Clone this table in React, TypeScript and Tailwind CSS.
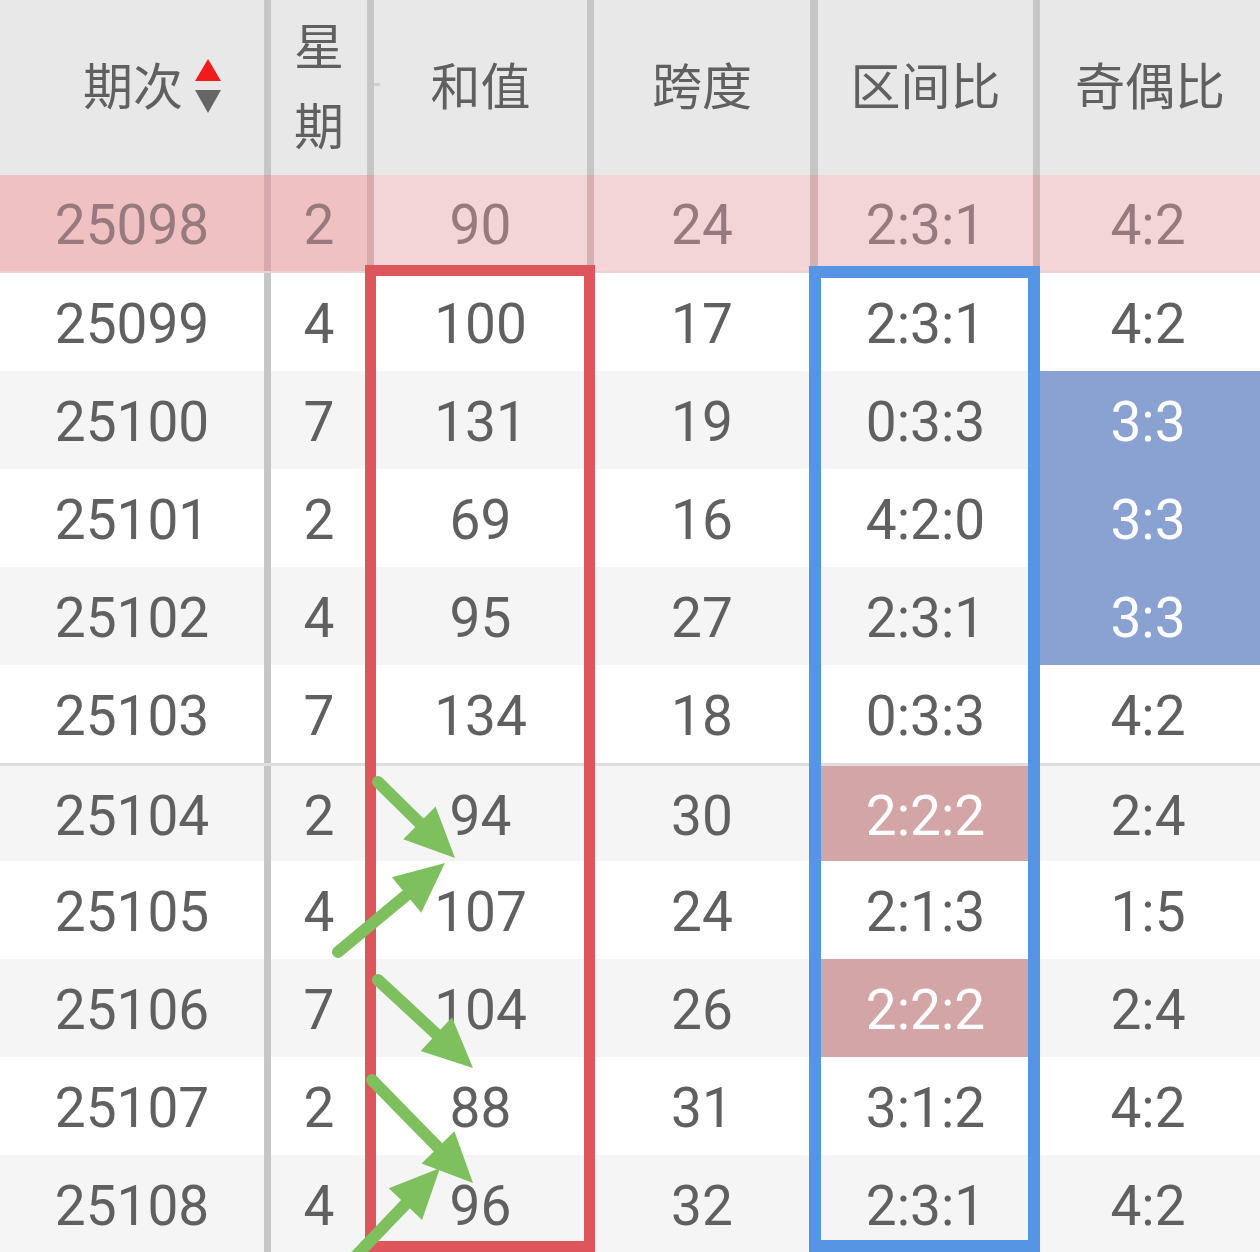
import React from 'react';

type Row = {
  no: string;
  week: string;
  sum: string;
  span: string;
  zone: string;
  oe: string;
  zoneHi?: boolean;
  oeHi?: boolean;
};

const rows: Row[] = [
  { no: '25098', week: '2', sum: '90', span: '24', zone: '2:3:1', oe: '4:2' },
  { no: '25099', week: '4', sum: '100', span: '17', zone: '2:3:1', oe: '4:2' },
  { no: '25100', week: '7', sum: '131', span: '19', zone: '0:3:3', oe: '3:3', oeHi: true },
  { no: '25101', week: '2', sum: '69', span: '16', zone: '4:2:0', oe: '3:3', oeHi: true },
  { no: '25102', week: '4', sum: '95', span: '27', zone: '2:3:1', oe: '3:3', oeHi: true },
  { no: '25103', week: '7', sum: '134', span: '18', zone: '0:3:3', oe: '4:2' },
  { no: '25104', week: '2', sum: '94', span: '30', zone: '2:2:2', oe: '2:4', zoneHi: true },
  { no: '25105', week: '4', sum: '107', span: '24', zone: '2:1:3', oe: '1:5' },
  { no: '25106', week: '7', sum: '104', span: '26', zone: '2:2:2', oe: '2:4', zoneHi: true },
  { no: '25107', week: '2', sum: '88', span: '31', zone: '3:1:2', oe: '4:2' },
  { no: '25108', week: '4', sum: '96', span: '32', zone: '2:3:1', oe: '4:2' },
];

// green hand-drawn arrows: [startX, startY, tipX, tipY]
const arrows: [number, number, number, number][] = [
  [378, 782, 455, 858],
  [338, 952, 445, 863],
  [378, 980, 473, 1068],
  [372, 1080, 473, 1183],
  [352, 1260, 440, 1168],
];

function Arrow({ a }: { a: [number, number, number, number] }) {
  const [x1, y1, x2, y2] = a;
  const dx = x2 - x1;
  const dy = y2 - y1;
  const len = Math.hypot(dx, dy);
  const ux = dx / len;
  const uy = dy / len;
  const head = 50;
  const half = 23;
  const bx = x2 - ux * head;
  const by = y2 - uy * head;
  const p1 = `${bx - uy * half},${by + ux * half}`;
  const p2 = `${bx + uy * half},${by - ux * half}`;
  return (
    <g>
      <line
        x1={x1}
        y1={y1}
        x2={bx + ux * 6}
        y2={by + uy * 6}
        stroke="#7fc05e"
        strokeWidth={12}
        strokeLinecap="round"
      />
      <polygon points={`${x2},${y2} ${p1} ${p2}`} fill="#7fc05e" />
    </g>
  );
}

const cols = 'grid grid-cols-[271px_103px_220px_224px_222px_220px]';
const cell = 'flex items-center justify-center pt-[5px]';

export default function App() {
  return (
    <div
      className="relative w-[1260px] h-[1252px] overflow-hidden bg-white text-[#606060]"
      style={{ fontFamily: 'Roboto, "Noto Sans CJK SC", sans-serif' }}
    >
      {/* Header */}
      <div className={`${cols} h-[175px] bg-[#e8e8e8] text-[50px] leading-none`}>
        <div className="flex items-center justify-center pl-10 border-r-[7px] border-[#c6c6c6]">
          <span>期次</span>
          <svg width="26" height="54" viewBox="0 0 26 54" className="ml-3 -mt-1">
            <polygon points="13,0 26,22 0,22" fill="#f21b1b" />
            <polygon points="0,31 26,31 13,54" fill="#666666" />
          </svg>
        </div>
        <div className="flex items-center justify-center text-center leading-[80px] border-r-[7px] border-[#c6c6c6]">
          星期
        </div>
        <div className="relative flex items-center justify-center border-r-[7px] border-[#c6c6c6]">
          <span className="absolute left-0 top-[83px] w-[6px] h-[3px] bg-[#cfcfcf]" />
          和值
        </div>
        <div className="flex items-center justify-center border-r-[8px] border-[#c6c6c6]">跨度</div>
        <div className="flex items-center justify-center border-r-[7px] border-[#c6c6c6]">区间比</div>
        <div className="flex items-center justify-center">奇偶比</div>
      </div>

      {/* Body */}
      {rows.map((r, i) => {
        const pink = i === 0;
        const bg = pink ? 'bg-[#f3d5d7]' : i % 2 === 0 ? 'bg-[#f5f5f5]' : 'bg-white';
        const line = pink ? 'border-[#d5b0b3]' : 'border-[#c6c6c6]';
        return (
          <div
            key={r.no}
            className={`${cols} h-[98px] text-[55px] leading-none ${bg} ${
              pink ? 'text-[#977a7d] border-b-2 border-[#ead3d5]' : ''
            } ${i === 6 ? 'border-t-[3px] border-[#dedede]' : ''}`}
          >
            <div className={`${cell} border-r-[7px] ${pink ? 'bg-[#f0c1c3] border-[#d8a9ac]' : line}`}>
              {r.no}
            </div>
            <div className={`${cell} border-r-[7px] ${pink ? 'bg-[#f0c1c3] border-[#d8a9ac]' : line}`}>
              {r.week}
            </div>
            <div className={`${cell} border-r-[7px] ${line}`}>{r.sum}</div>
            <div className={`${cell} border-r-[8px] ${line}`}>{r.span}</div>
            <div className={`${cell} border-r-[7px] ${line} ${r.zoneHi ? 'bg-[#d4a5a7] text-white' : ''}`}>
              {r.zone}
            </div>
            <div className={`${cell} pr-1 ${r.oeHi ? 'bg-[#8aa2d2] text-white' : ''}`}>{r.oe}</div>
          </div>
        );
      })}

      {/* Annotation boxes */}
      <div className="absolute left-[365px] top-[265px] w-[230px] h-[987px] border-[11px] border-[#dc565b]" />
      <div className="absolute left-[809px] top-[266px] w-[231px] h-[986px] border-[12px] border-[#5595e3]" />

      {/* Arrows */}
      <svg className="absolute inset-0 pointer-events-none" width="1260" height="1252" viewBox="0 0 1260 1252">
        {arrows.map((a, i) => (
          <Arrow key={i} a={a} />
        ))}
      </svg>
    </div>
  );
}
